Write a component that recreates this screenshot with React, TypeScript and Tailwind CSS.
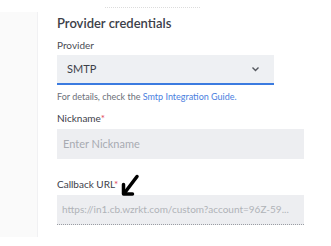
export default function App() {
  return (
    <div className="relative flex h-[246px] w-[331px] overflow-hidden bg-white font-['Lato',sans-serif]">
      <div className="mt-[12px] h-[225px] w-[38px] shrink-0 border-r border-[#f1f1f3] bg-[#fafafa]" />
      <div className="flex flex-col pl-[19px]">
        <div className="ml-[48px] h-[8px] w-[95px] border-b border-dotted border-[#dcdcdc]" />
        <h2 className="mt-[7px] text-[13px] font-semibold leading-[16px] text-[#3c4049]">
          Provider credentials
        </h2>
        <label className="mt-[8px] text-[10px] leading-[12px] text-[#4a4d55]">Provider</label>
        <div className="mt-[4px] flex h-[30px] w-[217px] items-center justify-between border-b-2 border-[#3b7be0] bg-[#eef0f3] pl-[10px] pr-[14px]">
          <span className="text-[11px] text-[#3c4049]">SMTP</span>
          <svg width="9" height="6" viewBox="0 0 9 6" fill="none">
            <path d="M1.5 1.5 L4.5 4.5 L7.5 1.5" stroke="#55585f" strokeWidth="1.4" />
          </svg>
        </div>
        <p className="mt-[6px] text-[9px] leading-[12px] text-[#6b6f78]">
          For details, check the <span className="text-[#4a80e0]">Smtp Integration Guide.</span>
        </p>
        <label className="mt-[9px] text-[10px] leading-[12px] text-[#3c4049]">
          Nickname<span className="text-[#e0455a]">*</span>
        </label>
        <div className="mt-[5px] flex h-[30px] w-[247px] items-center bg-[#edeef1] pl-[6px]">
          <span className="text-[11px] text-[#a8abb1]">Enter Nickname</span>
        </div>
        <label className="mt-[19px] text-[10px] leading-[12px] text-[#3c4049]">
          Callback URL<span className="text-[#e0455a]">*</span>
        </label>
        <div className="mt-[5px] flex h-[30px] w-[247px] items-center border-b border-dotted border-[#9a9da3] bg-[#edeef1] pl-[5px]">
          <span className="text-[10px] text-[#b0b3b8]">https://in1.cb.wzrkt.com/custom?account=96Z-59...</span>
        </div>
      </div>
      <svg className="absolute left-[121px] top-[174px]" width="20" height="23" viewBox="0 0 20 23" fill="none">
        <path d="M16 2.5 L3.5 19" stroke="#000" strokeWidth="3.5" strokeLinecap="round" />
        <path d="M2.5 10.5 L2.5 20 L11.5 20" stroke="#000" strokeWidth="3.5" strokeLinecap="round" strokeLinejoin="round" />
      </svg>
    </div>
  );
}
